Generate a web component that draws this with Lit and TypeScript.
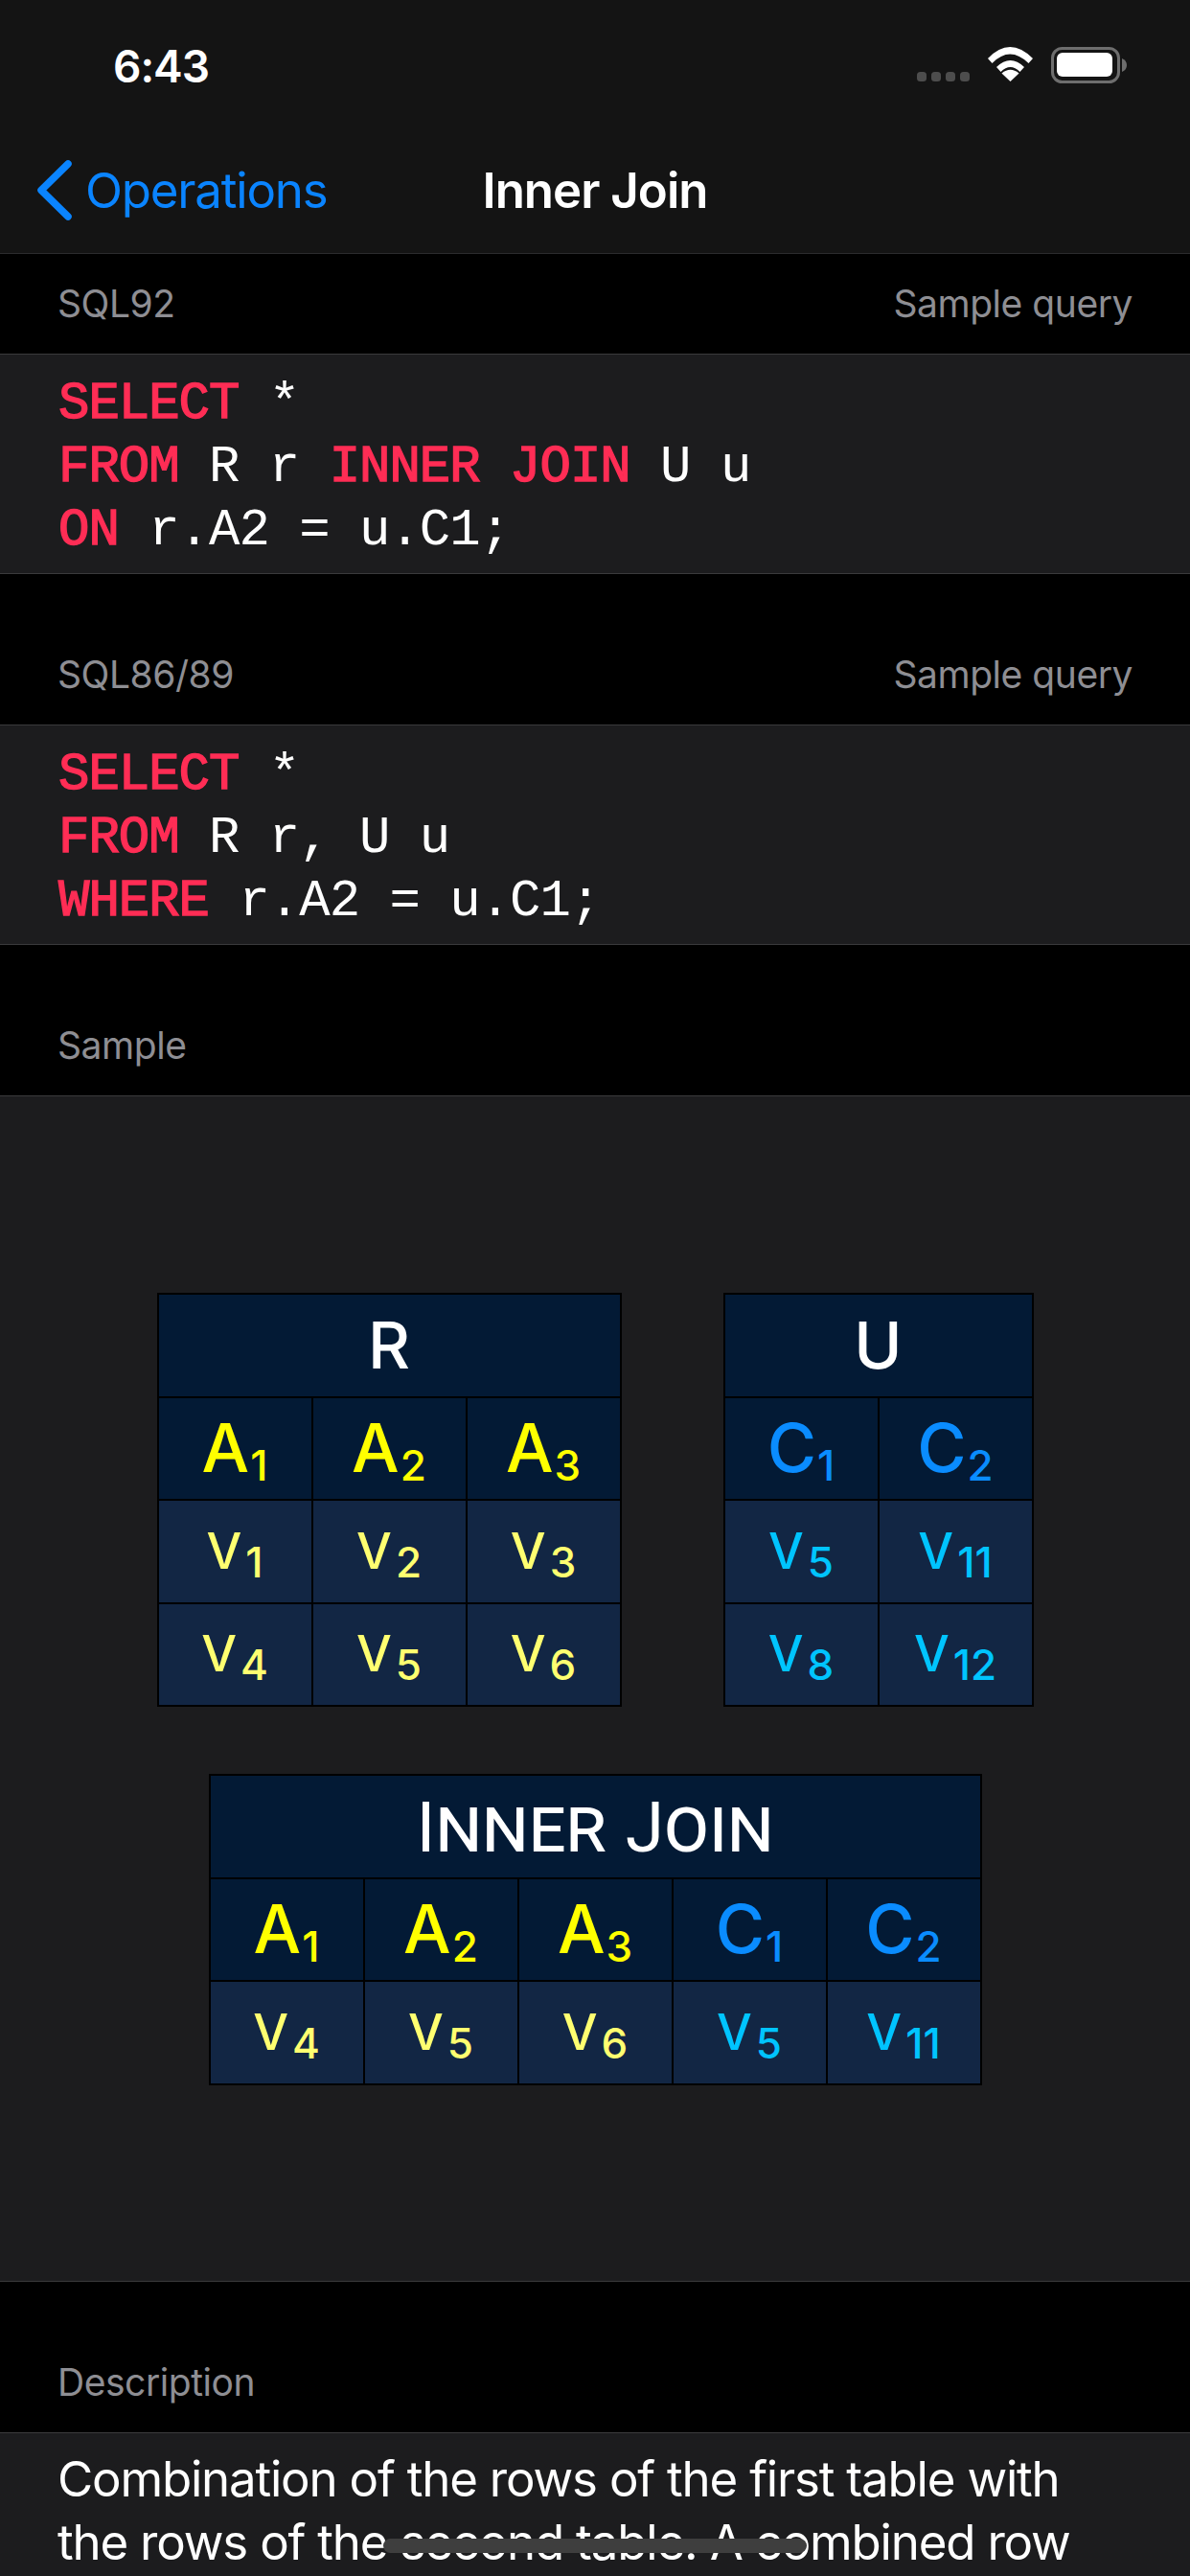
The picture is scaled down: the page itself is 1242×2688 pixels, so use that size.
// Inner Join detail screen: nav bar, two SQL samples, sample tables, description.
import { LitElement, html, css } from "lit";
import { customElement } from "lit/decorators.js";

type Tone = "yellow" | "blue";
interface Label { base: string; sub: string; tone: Tone; }

const lbl = (base: string, sub: string, tone: Tone): Label => ({ base, sub, tone });

const R_HEAD = [lbl("A", "1", "yellow"), lbl("A", "2", "yellow"), lbl("A", "3", "yellow")];
const R_ROWS = [
  [lbl("V", "1", "yellow"), lbl("V", "2", "yellow"), lbl("V", "3", "yellow")],
  [lbl("V", "4", "yellow"), lbl("V", "5", "yellow"), lbl("V", "6", "yellow")],
];
const U_HEAD = [lbl("C", "1", "blue"), lbl("C", "2", "blue")];
const U_ROWS = [
  [lbl("V", "5", "blue"), lbl("V", "11", "blue")],
  [lbl("V", "8", "blue"), lbl("V", "12", "blue")],
];
const J_HEAD = [...R_HEAD, ...U_HEAD];
const J_ROWS = [[...R_ROWS[1], U_ROWS[0][0], U_ROWS[0][1]]];

@customElement("app-root")
export class AppRoot extends LitElement {
  static styles = css`
    :host {
      display: block;
      position: relative;
      height: 2688px;
      overflow: hidden;
      background: #000;
      font-family: Inter, "Liberation Sans", sans-serif;
      color: #fff;
    }
    /* top chrome */
    .chrome {
      background: #141414;
      height: 264px;
      border-bottom: 1px solid #2c2c2e;
      display: flex;
      flex-direction: column;
    }
    .status {
      height: 132px;
      display: flex;
      justify-content: space-between;
      padding: 0 65px 0 118px;
    }
    .time {
      font-size: 46px;
      font-weight: 600;
      line-height: 46px;
      margin-top: 46px;
      letter-spacing: -1px;
    }
    .status-icons { display: block; margin-top: 49px; }
    .nav {
      position: relative;
      flex: 1;
      display: flex;
      align-items: center;
      justify-content: center;
    }
    .back {
      position: absolute;
      left: 38px;
      top: 35px;
      display: flex;
      align-items: center;
      gap: 14px;
      color: #0a84ff;
      font-size: 51px;
      letter-spacing: -1.2px;
      height: 63px;
    }
    .title {
      font-size: 51px;
      font-weight: 600;
      letter-spacing: -1px;
    }
    /* grouped sections */
    .head {
      display: flex;
      justify-content: space-between;
      align-items: flex-end;
      padding: 0 60px 29px 60px;
      color: #8e8e93;
      font-size: 39px;
      line-height: 46px;
      letter-spacing: -0.45px;
      border-bottom: 1px solid #3a3a3c;
    }
    .head.first { height: 105px; box-sizing: border-box; }
    .head.tall { height: 158px; box-sizing: border-box; }
    .card {
      background: #1c1c1e;
      border-bottom: 1px solid #3a3a3c;
    }
    .code {
      margin: 0;
      padding: 19px 61px 11px;
      font-family: "Liberation Mono", monospace;
      font-size: 54px;
      line-height: 66px;
      letter-spacing: -1px;
      color: #fff;
    }
    .kw { color: #ff2d55; -webkit-text-stroke: 1.4px #ff2d55; }
    .diagram {
      display: flex;
      flex-direction: column;
      align-items: center;
      gap: 70px;
      padding: 205px 0 204px;
    }
    .pair { display: flex; gap: 106px; }
    .desc {
      border-bottom: none;
      padding: 15px 62px 0 60px;
      font-size: 51px;
      line-height: 66px;
      letter-spacing: -1.2px;
      height: 151px;
      box-sizing: border-box;
    }
    .home {
      position: absolute;
      left: 400px;
      top: 2649px;
      width: 442px;
      height: 15px;
      border-radius: 8px;
      background: #3e3e3e;
    }
    /* relation tables */
    .rel {
      display: grid;
      grid-auto-rows: 105.5px;
      gap: 2px;
      padding: 2px;
      background: #000;
    }
    .rel > div {
      display: flex;
      align-items: center;
      justify-content: center;
      background: #031a35;
    }
    .rel > .name {
      grid-column: 1 / -1;
      font-size: 68px;
      font-weight: 500;
      padding-bottom: 2px;
      box-sizing: border-box;
    }
    .rel > .name.join {
      font-family: Roboto, sans-serif;
      font-size: 80px;
      font-weight: 400;
      font-variant-caps: small-caps;
      letter-spacing: -0.2px;
    }
    .join .cap { font-size: 73px; font-variant-caps: normal; }
    .rel > .val { background: #122644; }
    .label {
      white-space: nowrap;
      line-height: 1;
      font-weight: 500;
    }
    .hd .label { font-size: 70px; }
    .val .label { font-size: 52px; }
    .label sub {
      vertical-align: baseline;
      position: relative;
      top: 9px;
      font-size: 44px;
      line-height: 0;
    }
    .hd .label sub { margin-left: 1px; }
    .val .label sub { margin-left: 4px; }
    .hd .yellow { color: #ffff00; }
    .hd .blue { color: #0a8cff; }
    .val .yellow { color: #ffff70; }
    .val .blue { color: #00c4ff; }
  `;

  private cell(l: Label, cls: string) {
    return html`<div class=${cls}>
      <span class="label ${l.tone}">${l.base}<sub>${l.sub}</sub></span>
    </div>`;
  }

  private table(name: unknown, nameCls: string, head: Label[], rows: Label[][]) {
    return html`<div class="rel" style="grid-template-columns: repeat(${head.length}, 159px)">
      <div class="name ${nameCls}">${name}</div>
      ${head.map((l) => this.cell(l, "hd"))}
      ${rows.map((r) => r.map((l) => this.cell(l, "val")))}
    </div>`;
  }

  render() {
    return html`
      <div class="chrome">
        <div class="status">
          <div class="time">6:43</div>
          <svg class="status-icons" width="220" height="38" viewBox="958 49 220 38">
            <g fill="#4d4d4d">
              <rect x="958" y="75" width="10" height="10" rx="3.5" />
              <rect x="973" y="75" width="10" height="10" rx="3.5" />
              <rect x="988" y="75" width="10" height="10" rx="3.5" />
              <rect x="1003" y="75" width="10" height="10" rx="3.5" />
            </g>
            <g fill="#fff">
              <path d="M1032 61 Q1055 37 1079 61 L1074.500 66 Q1055 47 1036.500 66 Z" />
              <path d="M1041 70 Q1055.500 56 1070 70 L1065.500 75 Q1055.500 65 1045.500 75 Z" />
              <path d="M1046.500 76.500 Q1055.500 69 1064.500 76.500 L1055.500 85 Z" />
            </g>
            <rect x="1099.500" y="50.500" width="69" height="35" rx="10" fill="none" stroke="#6e6e6e" stroke-width="3" />
            <rect x="1104" y="55" width="58" height="25" rx="6" fill="#fff" />
            <path d="M1172 61 Q1177 63 1177 68 Q1177 73 1172 75 Z" fill="#6e6e6e" />
          </svg>
        </div>
        <div class="nav">
          <div class="back">
            <svg width="37" height="63" viewBox="0 0 37 63">
              <path d="M33 4 L5 31.500 L33 59" fill="none" stroke="#0a84ff" stroke-width="7.500" stroke-linecap="round" stroke-linejoin="round" />
            </svg>
            <span>Operations</span>
          </div>
          <div class="title">Inner Join</div>
        </div>
      </div>

      <div class="head first"><span>SQL92</span><span>Sample query</span></div>
      <div class="card">
        <pre class="code"><span class="kw">SELECT</span> *
<span class="kw">FROM</span> R r <span class="kw">INNER JOIN</span> U u
<span class="kw">ON</span> r.A2 = u.C1;</pre>
      </div>

      <div class="head tall"><span>SQL86/89</span><span>Sample query</span></div>
      <div class="card">
        <pre class="code"><span class="kw">SELECT</span> *
<span class="kw">FROM</span> R r, U u
<span class="kw">WHERE</span> r.A2 = u.C1;</pre>
      </div>

      <div class="head tall"><span>Sample</span></div>
      <div class="card diagram">
        <div class="pair">
          ${this.table("R", "", R_HEAD, R_ROWS)}
          ${this.table("U", "", U_HEAD, U_ROWS)}
        </div>
        ${this.table(
          html`<span><span class="cap">I</span>nner <span class="cap">J</span>oin</span>`,
          "join",
          J_HEAD,
          J_ROWS,
        )}
      </div>

      <div class="head tall"><span>Description</span></div>
      <div class="card desc">
        Combination of the rows of the first table with<br />
        the rows of the second table. A combined row
      </div>
      <div class="home"></div>
    `;
  }
}
